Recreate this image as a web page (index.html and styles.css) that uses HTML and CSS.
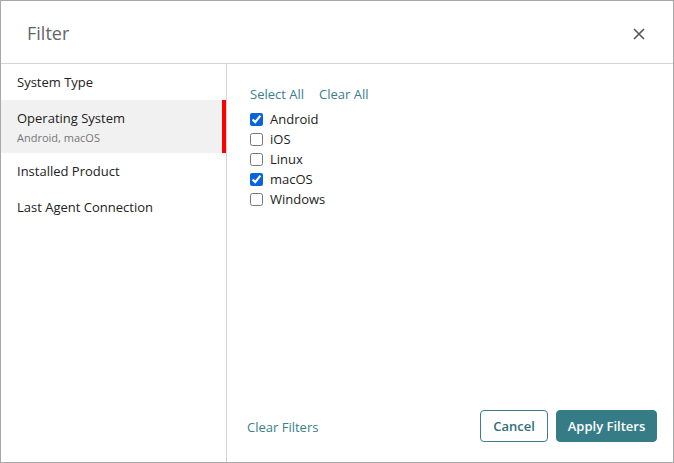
FILE: index.html
```html
<!DOCTYPE html>
<html lang="en">
<head>
    <meta charset="UTF-8">
    <title>Filter</title>
    <link rel="stylesheet" href="styles.css">
</head>
<body>
    <div class="dialog">
        <div class="dialog-header">
            <h2 class="dialog-title">Filter</h2>
            <button class="close-btn" aria-label="Close">
                <svg width="12" height="12" viewBox="0 0 12 12">
                    <path d="M1 1 L11 11 M11 1 L1 11" stroke="#555" stroke-width="1.6" fill="none"/>
                </svg>
            </button>
        </div>
        <div class="dialog-body">
            <ul class="categories">
                <li class="category">System Type</li>
                <li class="category active">
                    Operating System
                    <span class="category-summary">Android, macOS</span>
                </li>
                <li class="category">Installed Product</li>
                <li class="category">Last Agent Connection</li>
            </ul>
            <div class="panel">
                <div class="panel-links">
                    <a href="#" class="link">Select All</a>
                    <a href="#" class="link">Clear All</a>
                </div>
                <div class="options">
                    <label class="option"><input type="checkbox" checked> Android</label>
                    <label class="option"><input type="checkbox"> iOS</label>
                    <label class="option"><input type="checkbox"> Linux</label>
                    <label class="option"><input type="checkbox" checked> macOS</label>
                    <label class="option"><input type="checkbox"> Windows</label>
                </div>
                <div class="panel-footer">
                    <a href="#" class="link clear-filters">Clear Filters</a>
                    <div class="actions">
                        <button class="btn btn-secondary">Cancel</button>
                        <button class="btn btn-primary">Apply Filters</button>
                    </div>
                </div>
            </div>
        </div>
    </div>
</body>
</html>
```

FILE: styles.css
```css
* {
    margin: 0;
    padding: 0;
    box-sizing: border-box;
}

body {
    font-family: "Open Sans", "Liberation Sans", sans-serif;
    color: #222;
    background: #fff;
}

.dialog {
    width: 674px;
    height: 463px;
    border: 1px solid #a8a8a8;
    display: flex;
    flex-direction: column;
}

.dialog-header {
    height: 63px;
    border-bottom: 1px solid #d4d4d4;
    display: flex;
    align-items: center;
    justify-content: space-between;
    padding: 0 28px 0 26px;
    flex-shrink: 0;
}

.dialog-title {
    font-size: 18px;
    font-weight: 400;
    color: #666;
    margin-top: 1px;
}

.close-btn {
    border: none;
    background: none;
    width: 12px;
    height: 12px;
    display: flex;
    margin-top: 3px;
    cursor: pointer;
}

.dialog-body {
    flex: 1;
    display: flex;
}

.categories {
    list-style: none;
    width: 226px;
    border-right: 1px solid #d4d4d4;
    flex-shrink: 0;
}

.category {
    height: 36px;
    display: flex;
    flex-direction: column;
    justify-content: center;
    padding-left: 16px;
    font-size: 13px;
    color: #222;
}

.category.active {
    height: 53px;
    background: #f1f1f1;
    border-right: 4px solid #f00;
    padding-top: 1px;
}

.category-summary {
    font-size: 11px;
    color: #777;
    margin-top: 3px;
}

.panel {
    flex: 1;
    display: flex;
    flex-direction: column;
    padding: 21px 16px 20px 22px;
}

.link {
    color: #3a7f8a;
    text-decoration: none;
    font-size: 13px;
}

.panel-links {
    display: flex;
    gap: 15px;
    padding-left: 1px;
}

.options {
    margin-top: 6px;
    display: flex;
    flex-direction: column;
}

.option {
    height: 20px;
    display: flex;
    align-items: center;
    font-size: 13px;
    color: #222;
}

.option input {
    width: 13px;
    height: 13px;
    margin: 0 7px 0 1px;
    accent-color: #0b63dc;
}

.panel-footer {
    margin-top: auto;
    display: flex;
    justify-content: space-between;
    align-items: center;
}

.clear-filters {
    margin-left: -2px;
    margin-top: 2px;
}

.actions {
    display: flex;
    gap: 8px;
}

.btn {
    height: 32px;
    border-radius: 4px;
    font-family: inherit;
    font-size: 13px;
    font-weight: 600;
    padding: 0;
    white-space: nowrap;
    cursor: pointer;
}

.btn-secondary {
    width: 68px;
    background: #fff;
    border: 1px solid #3a7f8a;
    color: #2f6f7a;
}

.btn-primary {
    width: 101px;
    background: #367c87;
    border: 1px solid #367c87;
    color: #fff;
}
```
